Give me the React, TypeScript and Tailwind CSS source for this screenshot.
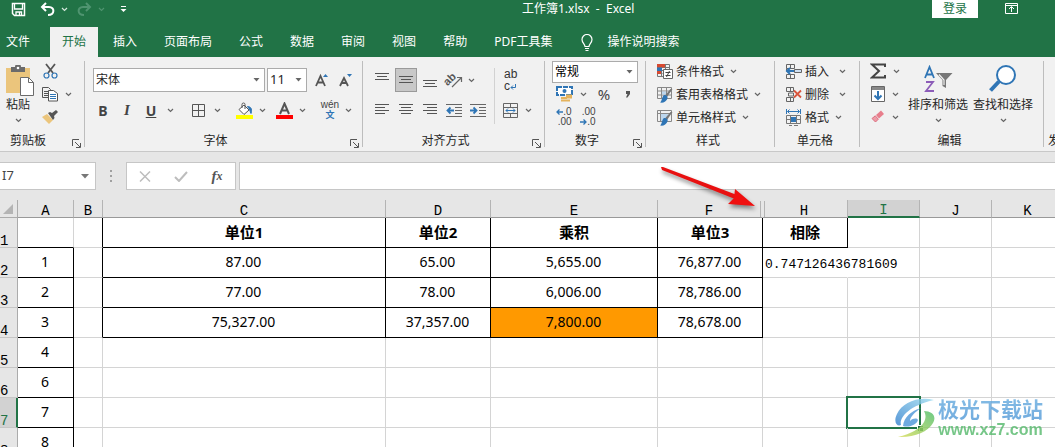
import React from 'react';

type Kids = { children?: React.ReactNode };

function Svg({ w, h, children }: Kids & { w: number; h: number }) {
  return (
    <svg width={w} height={h} viewBox={`0 0 ${w} ${h}`} fill="none" className="block shrink-0" aria-hidden="true">
      {children}
    </svg>
  );
}

function Chevron({ color = '#666666' }: { color?: string }) {
  return (
    <Svg w={7} h={5}>
      <path d="M1 1l2.5 2.5L6 1" stroke={color} strokeWidth="1.2" />
    </Svg>
  );
}

function Btn({ label, className = '', children }: Kids & { label: string; className?: string }) {
  return (
    <button type="button" aria-label={label} title={label} className={`flex shrink-0 items-center justify-center ${className}`}>
      {children}
    </button>
  );
}

function Divider() {
  return <span className="h-5 w-px shrink-0 bg-[#d2d2d2]" />;
}

function Group({
  label,
  className,
  labelClass = 'text-center',
  launcher = false,
  children,
}: Kids & { label: string; className: string; labelClass?: string; launcher?: boolean }) {
  return (
    <section aria-label={label} className={`my-1 flex shrink-0 flex-col justify-between border-r border-[#bdbdbd] ${className}`}>
      <div>{children}</div>
      <div className="flex h-3 items-center">
        <span className={`flex-1 whitespace-nowrap ${labelClass}`}>{label}</span>
        {launcher ? (
          <Btn label={`${label}设置`} className="h-3 w-4 pt-1">
            <Svg w={9} h={9}>
              <path d="M.5 7V.5H7M3 3l5 5M8.5 4v4.5H4" stroke="#555" />
            </Svg>
          </Btn>
        ) : (
          <span className="w-1" />
        )}
      </div>
    </section>
  );
}

function Combo({ label, value, className }: { label: string; value: string; className: string }) {
  return (
    <span className={`relative flex shrink-0 items-center border border-[#ababab] bg-white ${className}`}>
      <select aria-label={label} defaultValue={value} className="h-full w-full appearance-none bg-transparent pl-0.5 outline-none">
        <option>{value}</option>
      </select>
      <span className="pointer-events-none absolute right-1">
        <Svg w={7} h={4}>
          <path d="M.5 0h6L3.5 3.5z" fill="#666" />
        </Svg>
      </span>
    </span>
  );
}

function Lines({ rows }: { rows: number[][] }) {
  return (
    <Svg w={14} h={14}>
      {rows.map(([x, y, w], i) => (
        <path key={i} d={`M${x} ${y + 0.5}h${w}`} stroke="#555" />
      ))}
    </Svg>
  );
}

function IndentIcon({ d }: { d: string }) {
  return (
    <Svg w={16} h={14}>
      <path d="M0 1.5h16M9 4.5h7M9 7.5h7M9 10.5h7M0 13.5h16" stroke="#666" />
      <path d={d} stroke="#2f75b5" strokeWidth="1.8" />
    </Svg>
  );
}

function SheetIcon() {
  return (
    <Svg w={17} h={17}>
      <path d="M1.5 1.5h14v11h-14zM1.5 5h14M1.5 9h14M5.5 1.5v11M10.5 1.5v11" stroke="#888" />
      <path d="M6 5.5h4v3H6z" fill="#bdd7ee" />
      <path d="M16.5 3L11 11l-2-1.5L14.5 3z" fill="#777" />
      <path d="M8 9c3 0 4.500 2 3 4.500S7.500 17 4 16.500C6.500 14.500 5.500 11 8 9z" fill="#2f75b5" />
    </Svg>
  );
}

function CellStyleIcon() {
  return (
    <Svg w={17} h={17}>
      <path d="M1.5 1.5h14v11h-14zM1.5 4.5h14M4.5 1.5v11" stroke="#888" />
      <path d="M5 5h7v7H5z" fill="#bdd7ee" />
      <path d="M16.5 3L11 11l-2-1.5L14.5 3z" fill="#777" />
      <path d="M8 9c3 0 4.500 2 3 4.500S7.500 17 4 16.500C6.500 14.500 5.500 11 8 9z" fill="#2f75b5" />
    </Svg>
  );
}

function CondIcon() {
  return (
    <Svg w={17} h={17}>
      <path d="M1.5 1.5h12v12h-12zM1.5 4.5h12M1.5 7.5h12M1.5 10.5h5M5.5 1.5v12M9.5 1.5v5" stroke="#777" />
      <path d="M1 1h8v3.5H1zM1 8h4v3H1z" fill="#d64a31" />
      <path d="M1 4.5h5V8H1z" fill="#2f75b5" />
      <path d="M7.5 6.5h9v9h-9z" fill="#fff" stroke="#666" />
      <path d="M9.5 9.5h5M9.5 12.5h5M13.5 8l-3 6" stroke="#444" />
    </Svg>
  );
}

function InsertIcon() {
  return (
    <Svg w={17} h={17}>
      <path d="M1.5 1.5h8v4h-8zM5.5 1.5v4M1.5 11.5h8v4h-8zM5.5 11.5v4M1.5 5.5v3" stroke="#666" />
      <path d="M9.5 6.5h7v3h-7z" fill="#cfe0f2" stroke="#666" />
      <path d="M9 8H2M5 5L2 8l3 3" stroke="#2f75b5" strokeWidth="2" />
    </Svg>
  );
}

function DeleteIcon() {
  return (
    <Svg w={17} h={17}>
      <path d="M1.5 1.5h7v4h-7zM5.5 1.5v4M1.5 11.5h7v4h-7zM5.5 11.5v4M3.5 7h5v3h-5z" stroke="#666" />
      <path d="M9 4.5l7 7M16 4.5l-7 7" stroke="#d9553c" strokeWidth="1.8" />
    </Svg>
  );
}

function FormatIcon() {
  return (
    <Svg w={17} h={17}>
      <path d="M2.5 2.5h12M4.5 .5l-2 2 2 2M12.5 .5l2 2-2 2M1.5 0v5M15.5 0v5" stroke="#2f75b5" />
      <path d="M1.5 6.5h14v8h-14zM5.5 6.5v8M11.5 6.5v8M1.5 10.5h14M4 16.5h3M9 16.5h4" stroke="#777" />
      <path d="M6 8h5v5H6z" fill="#2f75b5" />
    </Svg>
  );
}

const tabs = ['插入', '页面布局', '公式', '数据', '审阅', '视图', '帮助', 'PDF工具集'];

function TitleBar() {
  return (
    <header className="flex h-[27px] items-start text-white">
      <div className="flex h-[18px] w-[522px] shrink-0 items-center pl-2.5">
        <Btn label="保存" className="w-4">
          <Svg w={15} h={15}>
            <path d="M1.5 1.5h12v12h-10l-2-2z" stroke="#fff" strokeWidth="1.5" />
            <path d="M3.5 2v5h8V2M5 13.5V10h5.5v3.5M8.5 10v3" stroke="#fff" strokeWidth="1.3" />
          </Svg>
        </Btn>
        <Btn label="撤消" className="ml-3 w-[18px]">
          <Svg w={15} h={14}>
            <path d="M6 1L2 5l4 4M2.5 5H9c6 0 6 8-1 8" stroke="#fff" strokeWidth="2" />
          </Svg>
        </Btn>
        <Btn label="撤消列表" className="ml-px w-3.5">
          <Chevron color="#d5e8dc" />
        </Btn>
        <Btn label="恢复" className="ml-1 w-[18px]">
          <Svg w={15} h={14}>
            <path d="M9 1l4 4-4 4M12.5 5H6c-6 0-6 8 1 8" stroke="#4f9470" strokeWidth="2" />
          </Svg>
        </Btn>
        <Btn label="恢复列表" className="ml-px w-3.5">
          <Chevron color="#4f9470" />
        </Btn>
        <Btn label="自定义快速访问工具栏" className="ml-2 w-3.5">
          <Svg w={7} h={8}>
            <path d="M1 1.5h5" stroke="#fff" />
            <path d="M.5 4h6l-3 3z" fill="#fff" />
          </Svg>
        </Btn>
      </div>
      <h1 className="h-[18px] whitespace-pre leading-[18px]">工作簿1.xlsx  -  Excel</h1>
      <div className="ml-auto flex items-start">
        <button type="button" className="h-[18px] w-[46px] bg-white leading-[18px] text-[#217346]">
          登录
        </button>
        <Btn label="功能区显示选项" className="ml-[25px] mr-9 h-4 w-4">
          <Svg w={13} h={11}>
            <path d="M.5 .5h12v10H.5zM.5 2.5h12M6.5 9V4M4 6l2.5-2.5L9 6" stroke="#fff" />
          </Svg>
        </Btn>
      </div>
    </header>
  );
}

function TabBar() {
  return (
    <nav className="flex h-[30px] items-stretch gap-[3px] whitespace-nowrap text-white">
      <button type="button" className="pl-1.5 pr-[17px]">文件</button>
      <button type="button" aria-current="page" className="bg-[#f1f1f1] px-3 text-[#217346]">开始</button>
      {tabs.map((t) => (
        <button type="button" key={t} className="px-3">{t}</button>
      ))}
      <button type="button" className="flex items-center gap-3.5 pl-3.5">
        <Svg w={12} h={17}>
          <path d="M4 12.5c0-2.5-3-3.5-3-7a5 5 0 0 1 10 0c0 3.5-3 4.5-3 7zM4 14.5h4M4.5 16.5h3" stroke="#fff" strokeWidth="1.2" />
        </Svg>
        操作说明搜索
      </button>
    </nav>
  );
}

function Clipboard() {
  return (
    <Group label="剪贴板" className="w-[85px]" labelClass="pl-2.5 text-left" launcher>
      <div className="flex">
        <button type="button" className="flex h-[62px] w-9 flex-col items-center pt-1">
          <span className="pl-1">
            <Svg w={30} h={31}>
              <path d="M1 3h24v25H1z" fill="#ebc57c" />
              <path d="M6 2h4a3 3 0 0 1 6 0h4v5H6z" fill="#6b6b6b" />
              <circle cx="13" cy="3" r="1.3" fill="#fff" />
              <path d="M15.5 12.5h8l5 5v13h-13z" fill="#fff" stroke="#6b6b6b" />
              <path d="M23.5 12.5v5h5" stroke="#6b6b6b" />
            </Svg>
          </span>
          <span className="leading-[18px]">粘贴</span>
          <span className="pt-1"><Chevron /></span>
        </button>
        <div className="flex flex-col gap-[3px] pl-1">
          <Btn label="剪切" className="h-5 w-5">
            <Svg w={15} h={16}>
              <path d="M3 1l7 9M12 1L5 10" stroke="#555" strokeWidth="1.8" />
              <circle cx="3.5" cy="12.5" r="2.5" stroke="#2f75b5" strokeWidth="1.2" />
              <circle cx="11.5" cy="12.5" r="2.5" stroke="#2f75b5" strokeWidth="1.2" />
            </Svg>
          </Btn>
          <div className="flex items-center gap-1">
            <Btn label="复制" className="h-5 w-5">
              <Svg w={16} h={15}>
                <path d="M.5 .5h6l2 2v8h-8zM2 4.5h4M2 6.5h4M2 8.5h4" stroke="#555" />
                <path d="M6.5 3.5h5l4 3V14h-9z" fill="#fff" stroke="#555" />
                <path d="M8 7.5h6M8 9.5h6M8 11.5h6" stroke="#2f75b5" />
              </Svg>
            </Btn>
            <Btn label="复制选项" className="h-5 w-2"><Chevron /></Btn>
          </div>
          <Btn label="格式刷" className="h-5 w-5">
            <Svg w={16} h={14}>
              <path d="M0 7l5-3 6 6-4 4z" fill="#ebc57c" />
              <path d="M6 3l2-1 2 1 4-3 2 2-4 4 .5 2L11 10z" fill="#555" />
            </Svg>
          </Btn>
        </div>
      </div>
    </Group>
  );
}

function FontGroup() {
  return (
    <Group label="字体" className="w-[278px]" launcher>
      <div className="flex flex-col gap-1.5 pt-[7px]">
        <div className="flex h-6 items-center pl-2">
          <Combo label="字体名称" value="宋体" className="h-6 w-[172px]" />
          <Combo label="字号" value="11" className="ml-0.5 h-6 w-10 text-[13px]" />
          <Btn label="增大字号" className="ml-2 h-6 w-3.5">
            <Svg w={14} h={15}>
              <path d="M1 13L5.5 3L10 13M2.5 9.5h6" stroke="#555" strokeWidth="1.8" />
              <path d="M8 4l2.5-3L13 4z" fill="#2f75b5" />
            </Svg>
          </Btn>
          <Btn label="减小字号" className="ml-2.5 h-6 w-3.5">
            <Svg w={14} h={15}>
              <path d="M1 13l4-8 4 8M2.5 10h5" stroke="#555" strokeWidth="1.8" />
              <path d="M8 1l2.5 3L13 1z" fill="#2f75b5" />
            </Svg>
          </Btn>
        </div>
        <div className="flex h-6 items-center pl-1.5 text-[14px] text-[#444]">
          <Btn label="加粗" className="w-6 font-bold">B</Btn>
          <Btn label="倾斜" className="w-6"><i className="font-['Liberation_Serif',serif] text-[15px] font-bold">I</i></Btn>
          <Btn label="下划线" className="w-6 font-bold underline">U</Btn>
          <Btn label="下划线选项" className="w-3.5"><Chevron /></Btn>
          <span className="ml-[5px]"><Divider /></span>
          <Btn label="边框" className="ml-1 w-6">
            <Svg w={13} h={13}>
              <path d="M.5 .5h12v12H.5zM6.5 0v13M0 6.5h13" stroke="#555" />
            </Svg>
          </Btn>
          <Btn label="边框选项" className="w-3.5"><Chevron /></Btn>
          <span className="ml-1"><Divider /></span>
          <Btn label="填充颜色" className="ml-1 w-6">
            <Svg w={17} h={17}>
              <path d="M3 7.5l5-4.5 5 5-5 4.5zM6 6V2.5a1.5 1.5 0 0 1 3 0V7" fill="#fff" stroke="#555" />
              <path d="M11.5 4.5c3 0 5 2 3.5 7-1-2-1-4-3.5-7z" fill="#2f75b5" stroke="#2f75b5" />
              <path d="M0 13h17v4H0z" fill="#ffff00" />
            </Svg>
          </Btn>
          <Btn label="填充颜色选项" className="w-3"><Chevron /></Btn>
          <Btn label="字体颜色" className="ml-1 w-6">
            <Svg w={17} h={17}>
              <path d="M4 12L8.5 1.5L13 12M5.5 8.5h6" stroke="#555" strokeWidth="2" />
              <path d="M0 13h17v4H0z" fill="#ff0000" />
            </Svg>
          </Btn>
          <Btn label="字体颜色选项" className="w-3"><Chevron /></Btn>
          <span className="ml-1.5"><Divider /></span>
          <Btn label="拼音指南" className="ml-1 w-6 flex-col font-['Liberation_Sans','Noto_Sans_CJK_SC',sans-serif]">
            <span className="text-[10px] leading-[10px]">wén</span>
            <span className="text-[9px] font-bold leading-[10px] text-[#2f75b5]">文</span>
          </Btn>
          <Btn label="拼音选项" className="w-3"><Chevron /></Btn>
        </div>
      </div>
    </Group>
  );
}

function AlignGroup() {
  return (
    <Group label="对齐方式" className="w-[182px]" launcher>
      <div className="flex pt-[7px]">
        <div className="flex flex-col gap-1.5 pl-[7px] pr-1">
          <div className="flex h-6 items-center">
            <Btn label="顶端对齐" className="h-6 w-6"><Lines rows={[[0, 0, 14], [2, 3, 10], [0, 6, 14]]} /></Btn>
            <Btn label="垂直居中" className="h-6 w-6">
              <span className="flex h-6 w-[22px] items-center justify-center border border-[#9a9a9a] bg-[#c8c8c8]">
                <Lines rows={[[0, 3, 14], [2, 6, 10], [0, 9, 14]]} />
              </span>
            </Btn>
            <Btn label="底端对齐" className="h-6 w-6"><Lines rows={[[0, 7, 14], [2, 10, 10], [0, 13, 14]]} /></Btn>
            <Btn label="方向" className="h-6 w-6">
              <Svg w={24} h={24}>
                <text x="3" y="16" fontSize="11" fontWeight="600" fill="#555" fontFamily="Liberation Sans, sans-serif" transform="rotate(-45 7 14)">ab</text>
                <path d="M10 19l9-9M15 9.5h4.5V14" stroke="#666" strokeWidth="1.2" />
              </Svg>
            </Btn>
            <Btn label="方向选项" className="h-6 w-2.5"><Chevron /></Btn>
          </div>
          <div className="flex h-6 items-center">
            <Btn label="左对齐" className="h-6 w-6"><Lines rows={[[0, 1, 14], [0, 4, 10], [0, 7, 14], [0, 10, 10]]} /></Btn>
            <Btn label="居中" className="h-6 w-6"><Lines rows={[[0, 1, 14], [2, 4, 10], [0, 7, 14], [2, 10, 10]]} /></Btn>
            <Btn label="右对齐" className="h-6 w-6"><Lines rows={[[0, 1, 14], [4, 4, 10], [0, 7, 14], [4, 10, 10]]} /></Btn>
            <Btn label="减少缩进量" className="h-6 w-6"><IndentIcon d="M8 7.5H2M4.5 4.5l-3 3 3 3" /></Btn>
            <Btn label="增加缩进量" className="h-6 w-6"><IndentIcon d="M0 7.5h6M3.5 4.5l3 3-3 3" /></Btn>
          </div>
        </div>
        <span className="h-14 w-px bg-[#d2d2d2]" />
        <div className="flex flex-col gap-1.5 pl-[3px]">
          <Btn label="自动换行" className="h-6 w-6 flex-col items-start pl-1.5 font-['Liberation_Sans',sans-serif] text-[12px] text-[#333]">
            <span className="leading-3">ab</span>
            <span className="flex items-center leading-3">
              c
              <Svg w={6} h={7}>
                <path d="M5.5 1v3.5H1M3 2.5l-2 2 2 2" stroke="#2f75b5" />
              </Svg>
            </span>
          </Btn>
          <div className="flex items-center">
            <Btn label="合并后居中" className="h-6 w-6">
              <Svg w={15} h={15}>
                <path d="M.5 .5h14v14H.5zM.5 4.5h14M.5 10.5h14M7.5 .5v4M7.5 10.5v4" stroke="#666" />
                <path d="M3 7.5h9M5 5.5l-2 2 2 2M10 5.5l2 2-2 2" stroke="#2f75b5" />
              </Svg>
            </Btn>
            <Btn label="合并选项" className="h-6 w-3"><Chevron /></Btn>
          </div>
        </div>
      </div>
    </Group>
  );
}

function NumberGroup() {
  return (
    <Group label="数字" className="w-[101px]" launcher>
      <div className="flex flex-col pl-[7px] text-[#444]">
        <Combo label="数字格式" value="常规" className="h-[22px] w-[86px] text-black" />
        <div className="mt-px flex h-5 items-center">
          <Btn label="会计数字格式" className="h-5 w-6">
            <Svg w={17} h={16}>
              <path d="M1 1h15v8H1z" fill="#fff" stroke="#2f75b5" strokeWidth="2" strokeDasharray="5 1" />
              <circle cx="8.5" cy="5" r="2" fill="#2f75b5" />
              <path d="M10 9.5h6M10 11.5h6M5 12h6M5 14.5h9" stroke="#e5b35c" strokeWidth="1.8" />
            </Svg>
          </Btn>
          <Btn label="会计格式选项" className="h-5 w-3.5"><Chevron /></Btn>
          <Btn label="百分比样式" className="ml-1 h-5 w-5 text-[15px] leading-5">%</Btn>
          <Btn label="千位分隔样式" className="ml-1 h-5 w-5">
            <Svg w={6} h={8}>
              <path d="M1 1h4v3L2.5 7.5H1L2.5 4H1z" fill="#555" />
            </Svg>
          </Btn>
        </div>
        <div className="mt-[3px] flex h-5 items-center font-['Liberation_Sans',sans-serif] text-[10px] leading-[10px]">
          <Btn label="增加小数位数" className="h-5 w-6">
            <span className="flex flex-col items-end">
              <span className="flex items-center">
                <Svg w={7} h={6}><path d="M7 3H1M3.5 .5L1 3l2.5 2.5" stroke="#2f75b5" strokeWidth="1.3" /></Svg>
                .0
              </span>
              <span>.00</span>
            </span>
          </Btn>
          <Btn label="减少小数位数" className="h-5 w-6">
            <span className="flex flex-col items-end">
              <span>.00</span>
              <span className="flex items-center">
                <Svg w={7} h={6}><path d="M0 3h6M3.5 .5L6 3 3.5 5.5" stroke="#2f75b5" strokeWidth="1.3" /></Svg>
                .0
              </span>
            </span>
          </Btn>
        </div>
      </div>
    </Group>
  );
}

function IconRow({ icon, text, gap = 'gap-1.5' }: { icon: React.ReactNode; text: string; gap?: string }) {
  return (
    <button type="button" className={`flex h-5 items-center whitespace-nowrap ${gap}`}>
      <span className="flex items-center gap-[3px] pt-px">
        {icon}
        {text}
      </span>
      <Chevron />
    </button>
  );
}

function EditGroup() {
  return (
    <Group label="编辑" className="w-[184px]">
      <div className="flex">
        <div className="flex w-[46px] flex-col gap-[3px] pl-2.5">
          <button type="button" aria-label="自动求和" className="flex h-5 items-center gap-1.5">
            <Svg w={17} h={16}>
              <path d="M15 4V1.5H2L9 8l-7 6.5h13V12" stroke="#444" strokeWidth="2" />
            </Svg>
            <Chevron />
          </button>
          <button type="button" aria-label="填充" className="flex h-5 items-center gap-1.5">
            <Svg w={16} h={16}>
              <path d="M1.5 .5h13v15h-13z" fill="#fff" stroke="#666" />
              <path d="M2 1h12v3H2z" fill="#888" />
              <path d="M8 5v8M4.5 9.5L8 13l3.5-3.5" stroke="#2f75b5" strokeWidth="2" />
            </Svg>
            <Chevron />
          </button>
          <button type="button" aria-label="清除" className="flex h-5 items-center gap-1.5">
            <Svg w={16} h={16}>
              <path d="M6 6l5-4.5L14 5 9 9.5z" fill="#e87e8c" />
              <path d="M5.3 6.8l3 3.4L5.5 13 2 9.5z" fill="#ee9ca7" stroke="#dd6f80" />
            </Svg>
            <Chevron />
          </button>
        </div>
        <button type="button" className="flex h-[62px] w-16 flex-col items-center whitespace-nowrap pt-1">
          <Svg w={30} h={31}>
            <path d="M2 13L6.5 2L11 13M3.5 9.5h6" stroke="#2f75b5" strokeWidth="1.8" />
            <path d="M3 17h7L3 26h8" stroke="#8c5cb8" strokeWidth="1.8" />
            <path d="M13 8h16.5L23 15v8l-3.5-2v-6z" fill="#777" />
            <path d="M16 9.5l5 5.5v5" stroke="#f1f1f1" strokeWidth="1.2" />
          </Svg>
          <span className="leading-[18px]">排序和筛选</span>
          <span className="pt-1"><Chevron /></span>
        </button>
        <button type="button" className="flex h-[62px] w-[66px] flex-col items-center whitespace-nowrap pt-1">
          <Svg w={30} h={31}>
            <circle cx="18" cy="10" r="9" fill="#fff" stroke="#2f75b5" strokeWidth="2" />
            <path d="M11 16.5l-8.5 9" stroke="#2f75b5" strokeWidth="4" />
          </Svg>
          <span className="leading-[18px]">查找和选择</span>
          <span className="pt-1"><Chevron /></span>
        </button>
      </div>
    </Group>
  );
}

function Ribbon() {
  return (
    <div className="flex h-[95px] items-stretch overflow-hidden border-b border-[#c8c8c8] bg-[#f1f1f1] text-[#262626]">
      <Clipboard />
      <FontGroup />
      <AlignGroup />
      <NumberGroup />
      <Group label="样式" className="w-[129px]">
        <div className="flex flex-col items-start gap-[3px] pl-2.5">
          <IconRow icon={<CondIcon />} text="条件格式" />
          <IconRow icon={<SheetIcon />} text="套用表格格式" />
          <IconRow icon={<CellStyleIcon />} text="单元格样式" />
        </div>
      </Group>
      <Group label="单元格" className="w-[85px]">
        <div className="flex flex-col items-start gap-[3px] pl-2.5">
          <IconRow icon={<InsertIcon />} text="插入" gap="gap-2.5" />
          <IconRow icon={<DeleteIcon />} text="删除" gap="gap-2.5" />
          <IconRow icon={<FormatIcon />} text="格式" />
        </div>
      </Group>
      <EditGroup />
      <div className="mb-1 flex flex-1 items-end pl-1 leading-3">发</div>
    </div>
  );
}

function FormulaBar() {
  return (
    <div className="flex h-12 shrink-0 items-center overflow-hidden">
      <div className="flex h-7 w-24 shrink-0 items-center border border-l-0 border-[#c6c6c6] bg-white pr-1.5">
        <input aria-label="名称框" defaultValue="I7" className="w-full min-w-0 bg-transparent pl-0.5 text-[13px] text-[#444] outline-none" />
        <Svg w={8} h={5}><path d="M0 0h8L4 4.5z" fill="#777" /></Svg>
      </div>
      <span className="flex w-[30px] shrink-0 justify-center">
        <Svg w={2} h={12}><path d="M0 1h2M0 6h2M0 11h2" stroke="#a0a0a0" strokeWidth="2" /></Svg>
      </span>
      <div className="flex h-7 w-[110px] shrink-0 items-center border border-[#c6c6c6] bg-white">
        <Btn label="取消" className="h-full w-9">
          <Svg w={12} h={11}><path d="M1 .5l10 10M11 .5l-10 10" stroke="#bdbdbd" strokeWidth="1.5" /></Svg>
        </Btn>
        <Btn label="输入" className="h-full w-9">
          <Svg w={14} h={11}><path d="M1 6l4 4 8-9" stroke="#bdbdbd" strokeWidth="2" /></Svg>
        </Btn>
        <Btn label="插入函数" className="h-full w-9 font-['Liberation_Serif',serif] text-[15px] font-bold italic text-[#555]">
          f<span className="text-[12px]">x</span>
        </Btn>
      </div>
      <input aria-label="编辑栏" className="ml-[3px] h-7 min-w-0 flex-1 border border-r-0 border-[#c6c6c6] bg-white px-2 outline-none" />
    </div>
  );
}

const columns = [
  { id: 'A', w: 'w-[56px]' },
  { id: 'B', w: 'w-[29px]' },
  { id: 'C', w: 'w-[283px]' },
  { id: 'D', w: 'w-[105px]' },
  { id: 'E', w: 'w-[167px]' },
  { id: 'F', w: 'w-[105px]' },
  { id: 'H', w: 'w-[85px]' },
  { id: 'I', w: 'w-[72px]' },
  { id: 'J', w: 'w-[72px]' },
  { id: 'K', w: 'w-[72px]' },
];

const rows: Record<string, string>[] = [
  { C: '单位1', D: '单位2', E: '乘积', F: '单位3', H: '相除' },
  { A: '1', C: '87.00', D: '65.00', E: '5,655.00', F: '76,877.00', H: '0.747126436781609' },
  { A: '2', C: '77.00', D: '78.00', E: '6,006.00', F: '78,786.00' },
  { A: '3', C: '75,327.00', D: '37,357.00', E: '7,800.00', F: '78,678.00' },
  { A: '4' },
  { A: '6' },
  { A: '7' },
  { A: '8' },
];

function cellStyle(col: string, row: number) {
  const inBlock = 'CDEF'.includes(col) && row <= 4;
  const blackRight = inBlock || (col === 'A' && row > 1) || (col === 'B' && row <= 4) || (col === 'H' && row === 1);
  const blackBottom = inBlock || col === 'A' || (col === 'H' && row === 1);
  const right = blackRight ? 'border-r-black' : col === 'H' && row === 2 ? 'border-r-transparent' : 'border-r-[#d4d4d4]';
  const bottom = blackBottom ? 'border-b-black' : 'border-b-[#d4d4d4]';
  const fill = col === 'E' && row === 4 ? 'bg-[#ff9900]' : '';
  const font =
    row === 1
      ? 'pb-0.5 text-center text-[15px] font-bold'
      : col === 'H'
        ? "pl-0.5 pt-1 text-left font-['Liberation_Mono',monospace] text-[13px]"
        : 'pb-0.5 pr-px text-center text-[14px]';
  return `relative h-[30px] whitespace-nowrap border-b border-r leading-5 ${right} ${bottom} ${fill} ${font}`;
}

function Sheet() {
  return (
    <table className="w-[1064px] table-fixed border-separate border-spacing-0 bg-white">
      <colgroup>
        <col className="w-[18px]" />
        {columns.map((c) => <col key={c.id} className={c.w} />)}
      </colgroup>
      <thead className="bg-[#e6e6e6] font-['Liberation_Mono',monospace] text-[14px] leading-4">
        <tr>
          <th className="h-[18px] border-b border-r border-[#ababab] p-0">
            <span className="flex h-full items-center justify-end pr-1">
              <Svg w={10} h={10}><path d="M10 0v10H0z" fill="#b4b4b4" /></Svg>
            </span>
          </th>
          {columns.map(({ id }) => {
            const tone =
              id === 'I'
                ? 'border-b-2 border-b-[#217346] border-r-[#b4b4b4] bg-[#d2d2d2] text-[#217346]'
                : id === 'F'
                  ? 'border-b border-b-[#999999] border-r-transparent'
                  : 'border-b border-b-[#999999] border-r-[#b4b4b4]';
            const inner = id === 'F' ? 'mr-px border-r border-[#b4b4b4]' : id === 'H' ? 'ml-px border-l border-[#b4b4b4] pr-1' : '';
            return (
              <th key={id} scope="col" className={`h-[18px] border-r p-0 align-bottom font-normal ${tone}`}>
                <span className={`block h-4 pt-0.5 ${inner}`}>{id}</span>
              </th>
            );
          })}
        </tr>
      </thead>
      <tbody>
        {rows.map((data, i) => {
          const row = i + 1;
          const tone = row === 7 ? 'border-r-2 border-r-[#217346] bg-[#d2d2d2] text-[#217346]' : 'border-r border-r-[#ababab] bg-[#e6e6e6]';
          return (
            <tr key={row}>
              <th scope="row" className={`h-[30px] border-b border-b-[#c6c6c6] p-0 text-left align-bottom font-['Liberation_Mono',monospace] text-[14px] font-normal leading-3 ${tone}`}>
                {row}
              </th>
              {columns.map(({ id }) => (
                <td key={id} className={cellStyle(id, row)}>
                  {data[id]}
                  {id === 'I' && row === 7 && (
                    <span className="absolute -inset-0.5 border-2 border-[#217346]">
                      <span className="absolute -bottom-1 -right-1 h-[6px] w-[6px] border-l border-t border-white bg-[#217346]" />
                    </span>
                  )}
                </td>
              ))}
            </tr>
          );
        })}
      </tbody>
    </table>
  );
}

function Arrow() {
  return (
    <svg width="108" height="52" viewBox="0 0 108 52" className="pointer-events-none absolute left-[655px] top-[162px] drop-shadow-[1px_3px_2px_rgba(0,0,0,0.45)]" aria-hidden="true">
      <path d="M6 5L8 5 82 33 80 37 7 8z" fill="#e81010" />
      <path d="M80 27L100 44 73 42 79 36z" fill="#f01010" />
    </svg>
  );
}

function Watermark() {
  return (
    <div className="pointer-events-none absolute bottom-2 right-3 flex items-center gap-0.5 opacity-80">
      <svg width="42" height="42" viewBox="0 0 42 42" aria-hidden="true">
        <defs>
          <linearGradient id="blue" x1="0" y1="1" x2="1" y2="0">
            <stop offset="0" stopColor="#2f7fce" />
            <stop offset="1" stopColor="#9ddcf0" />
          </linearGradient>
          <linearGradient id="green" x1="0" y1="1" x2="1" y2="0">
            <stop offset="0" stopColor="#d8dc55" />
            <stop offset="1" stopColor="#49bd68" />
          </linearGradient>
        </defs>
        <path d="M40 3C24-1 8 6 3 17-1 25 3 30 7 28 5 21 14 9 40 3z" fill="url(#blue)" />
        <path d="M9 29c1-9 8-15 18-18-6 4-11 9-11 13 3-3 7-3 8-1-1 4-8 8-15 6z" fill="#4c96d8" />
        <path d="M30 14c8 0 13 5 9 12C34 35 19 41 4 40c13-3 23-9 26-15 2-4 2-7 0-11z" fill="url(#green)" />
      </svg>
      <div className="flex flex-col items-center">
        <span className="bg-gradient-to-b from-[#67acdf] to-[#4e97d7] bg-clip-text text-[21px] font-bold leading-6 text-transparent">极光下载站</span>
        <span className="font-['Liberation_Sans',sans-serif] text-[16px] font-bold leading-[18px] text-[#55b96b]">www.xz7.com</span>
      </div>
    </div>
  );
}

export default function App() {
  return (
    <div className="relative flex h-screen flex-col overflow-hidden bg-[#e6e6e6] font-['Noto_Sans','Noto_Sans_CJK_SC',sans-serif] text-[12px] text-black">
      <div className="shrink-0 bg-[#217346]">
        <TitleBar />
        <TabBar />
      </div>
      <div className="shrink-0"><Ribbon /></div>
      <FormulaBar />
      <main className="min-h-0 flex-1 overflow-hidden bg-white">
        <Sheet />
      </main>
      <Arrow />
      <Watermark />
    </div>
  );
}
